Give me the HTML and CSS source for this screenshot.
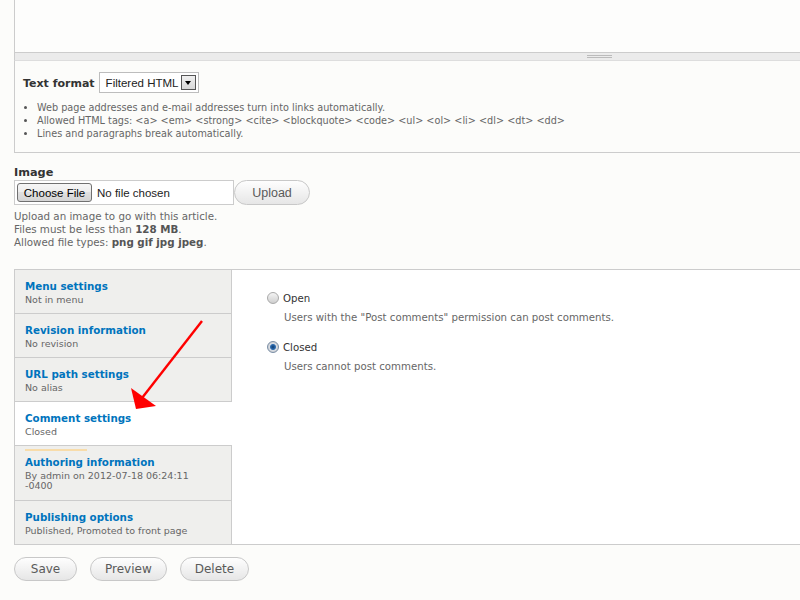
FILE: index.html
```html
<!DOCTYPE html>
<html lang="en">
	<head>
		<meta charset="UTF-8" />
		<title>Edit Article</title>
		<link rel="stylesheet" href="styles.css">
	</head>
	<body>
		<div class="page">
			<div class="editor">
				<div class="textarea"></div>
				<div class="grippie"><span class="grippie-handle"></span></div>
				<div class="filter">
					<div class="filter-row">
						<label class="filter-label">Text format</label>
						<span class="select">Filtered HTML<span class="select-arrow"></span></span>
					</div>
					<ul class="tips">
						<li>Web page addresses and e-mail addresses turn into links automatically.</li>
						<li>Allowed HTML tags: &lt;a&gt; &lt;em&gt; &lt;strong&gt; &lt;cite&gt; &lt;blockquote&gt; &lt;code&gt; &lt;ul&gt; &lt;ol&gt; &lt;li&gt; &lt;dl&gt; &lt;dt&gt; &lt;dd&gt;</li>
						<li>Lines and paragraphs break automatically.</li>
					</ul>
				</div>
			</div>

			<div class="field-image">
				<label class="field-label">Image</label>
				<div class="upload-row">
					<div class="file-input">
						<span class="file-btn">Choose File</span>
						<span class="file-name">No file chosen</span>
					</div>
					<button class="button upload">Upload</button>
				</div>
				<div class="description">
					Upload an image to go with this article.<br>
					Files must be less than <strong>128 MB</strong>.<br>
					Allowed file types: <strong>png gif jpg jpeg</strong>.
				</div>
			</div>

			<div class="vtabs">
				<ul class="vtab-list">
					<li class="vtab"><a class="vtab-title">Menu settings</a><span class="vtab-summary">Not in menu</span></li>
					<li class="vtab"><a class="vtab-title">Revision information</a><span class="vtab-summary">No revision</span></li>
					<li class="vtab"><a class="vtab-title">URL path settings</a><span class="vtab-summary">No alias</span></li>
					<li class="vtab selected"><a class="vtab-title">Comment settings</a><span class="vtab-summary">Closed</span></li>
					<li class="vtab focused"><a class="vtab-title">Authoring information</a><span class="vtab-summary">By admin on 2012-07-18 06:24:11 -0400</span></li>
					<li class="vtab"><a class="vtab-title">Publishing options</a><span class="vtab-summary">Published, Promoted to front page</span></li>
				</ul>
				<div class="vtab-pane">
					<div class="radio-item"><span class="radio"></span><label>Open</label></div>
					<div class="radio-desc">Users with the "Post comments" permission can post comments.</div>
					<div class="radio-item"><span class="radio checked"></span><label>Closed</label></div>
					<div class="radio-desc">Users cannot post comments.</div>
				</div>
			</div>

			<div class="actions">
				<button class="button">Save</button>
				<button class="button">Preview</button>
				<button class="button">Delete</button>
			</div>
		</div>

		<!-- annotation arrow drawn over the page -->
		<svg class="arrow" width="800" height="600" viewBox="0 0 800 600">
			<line x1="202" y1="321" x2="142" y2="398" stroke="#ff0000" stroke-width="2.4" />
			<polygon points="131,388 136,409 156,406" fill="#ff0000" />
		</svg>
	</body>
</html>
```

FILE: styles.css
```css
body {
	margin: 0;
	background: #fcfcfa;
	font-family: "DejaVu Sans", sans-serif;
	color: #333;
	overflow: hidden;
}

.page {
	margin: 0 -8px 0 14px;
}

/* body textarea + filter */
.textarea {
	height: 52px;
	border-left: 1px solid #ccc;
	background: #fdfdfc;
}

.grippie {
	height: 7px;
	border-top: 1px solid #ccc;
	border-bottom: 1px solid #ddd;
	border-left: 1px solid #ccc;
	background: #ebebeb;
}

.grippie-handle {
	display: block;
	width: 25px;
	height: 1px;
	margin: 2px 0 0 572px;
	border-top: 1px solid #bbb;
	border-bottom: 1px solid #bbb;
}

.filter {
	border-left: 1px solid #ccc;
	border-bottom: 1px solid #ccc;
	padding: 11px 8px 12px;
}

.filter-row {
	display: flex;
	align-items: center;
	height: 21px;
}

.filter-label {
	font-size: 11px;
	font-weight: bold;
	color: #333;
	margin: 2px 4px 0 0;
}

.select {
	display: flex;
	align-items: center;
	justify-content: space-between;
	box-sizing: border-box;
	width: 100px;
	height: 21px;
	padding: 0 2px 0 6px;
	border: 1px solid #bdbdbd;
	background: #fff;
	font-family: "Liberation Sans", Arial, sans-serif;
	font-size: 11.5px;
	color: #222;
}

.select-arrow {
	position: relative;
	box-sizing: border-box;
	width: 15px;
	height: 15px;
	border: 1px solid #555;
	background: linear-gradient(#f0f0f0, #d8d8d8);
}

.select-arrow::after {
	content: "";
	position: absolute;
	left: 3px;
	top: 5px;
	border-left: 3.5px solid transparent;
	border-right: 3.5px solid transparent;
	border-top: 4px solid #000;
}

.tips {
	list-style: none;
	margin: 8px 0 0;
	padding: 0;
	font-size: 9.7px;
	line-height: 13px;
	color: #666;
}

.tips li {
	position: relative;
	padding-left: 14px;
}

.tips li::before {
	content: "";
	position: absolute;
	left: 1px;
	top: 5px;
	width: 3px;
	height: 3px;
	border-radius: 50%;
	background: #555;
}

/* image field */
.field-image {
	margin-top: 13px;
}

.field-label {
	display: block;
	font-size: 11.3px;
	font-weight: bold;
	line-height: 13px;
	margin-bottom: 1px;
}

.upload-row {
	display: flex;
}

.file-input {
	display: flex;
	align-items: center;
	box-sizing: border-box;
	width: 220px;
	height: 25px;
	padding-left: 2px;
	border: 1px solid #ccc;
	background: #fff;
	font-family: "Liberation Sans", Arial, sans-serif;
	font-size: 11.5px;
}

.file-btn {
	display: flex;
	align-items: center;
	justify-content: center;
	box-sizing: border-box;
	width: 75px;
	height: 19px;
	border: 1px solid #707070;
	border-radius: 3px;
	background: linear-gradient(#f6f6f6, #ececec 50%, #e0e0e0 50%, #d4d4d4);
	color: #000;
}

.file-name {
	margin-left: 5px;
	color: #222;
}

.button {
	min-width: 63px;
	height: 24px;
	padding: 0 14px;
	margin: 0;
	border: 1px solid #c8c8c8;
	border-radius: 20px;
	background: linear-gradient(#fefefe, #e6e6e6);
	font-family: "DejaVu Sans", sans-serif;
	font-size: 12px;
	color: #5a5a5a;
	cursor: pointer;
}

.upload {
	width: 76px;
	height: 25px;
	padding: 0;
	font-family: "Liberation Sans", Arial, sans-serif;
	font-size: 12.5px;
}

.description {
	margin-top: 5px;
	font-size: 10.3px;
	line-height: 13px;
	color: #666;
}

.description strong {
	color: #555;
}

/* vertical tabs */
.vtabs {
	display: flex;
	margin-top: 20px;
	border-top: 1px solid #ccc;
	border-left: 1px solid #ccc;
	border-bottom: 1px solid #ccc;
}

.vtab-list {
	width: 216px;
	margin: 0;
	padding: 0;
	list-style: none;
}

.vtab {
	padding: 10px 14px 8px 10px;
	border-bottom: 1px solid #ccc;
	background: #efefed;
}

.vtab:last-child {
	border-bottom: none;
}

.vtab.selected {
	position: relative;
	margin-right: -1px;
	background: #fff;
}

.vtab.focused {
	padding-bottom: 9px;
}

.vtab.focused::before {
	content: "";
	display: block;
	width: 62px;
	height: 2px;
	margin: -7px 0 5px;
	background: #f8dcaa;
}

.vtab-title {
	display: block;
	font-size: 10.3px;
	font-weight: bold;
	line-height: 13px;
	color: #0074bd;
}

.vtab-summary {
	display: block;
	margin-top: 2px;
	font-size: 9.5px;
	line-height: 10px;
	color: #666;
}

.vtab-pane {
	flex: 1;
	padding: 21px 0 0 35px;
	border-left: 1px solid #ccc;
	background: #fff;
}

.radio-item {
	display: flex;
	align-items: center;
	height: 14px;
	font-size: 10.2px;
	color: #333;
}

.radio {
	box-sizing: border-box;
	width: 12px;
	height: 12px;
	margin-right: 4px;
	border: 1px solid #a9a9a9;
	border-radius: 50%;
	background: linear-gradient(#f4f4f4, #cfcfcf);
}

.radio.checked {
	border-color: #7a8ea6;
	background: radial-gradient(circle, #0c3b70 0, #2f6db0 2.5px, #d8dde4 3.5px, #c4c4c4 6px);
}

.radio-desc {
	margin: 6px 0 16px 17px;
	font-size: 10.2px;
	line-height: 13px;
	color: #666;
}

.actions {
	display: flex;
	gap: 13px;
	margin-top: 12px;
}

.arrow {
	position: absolute;
	left: 0;
	top: 0;
	pointer-events: none;
}
```
